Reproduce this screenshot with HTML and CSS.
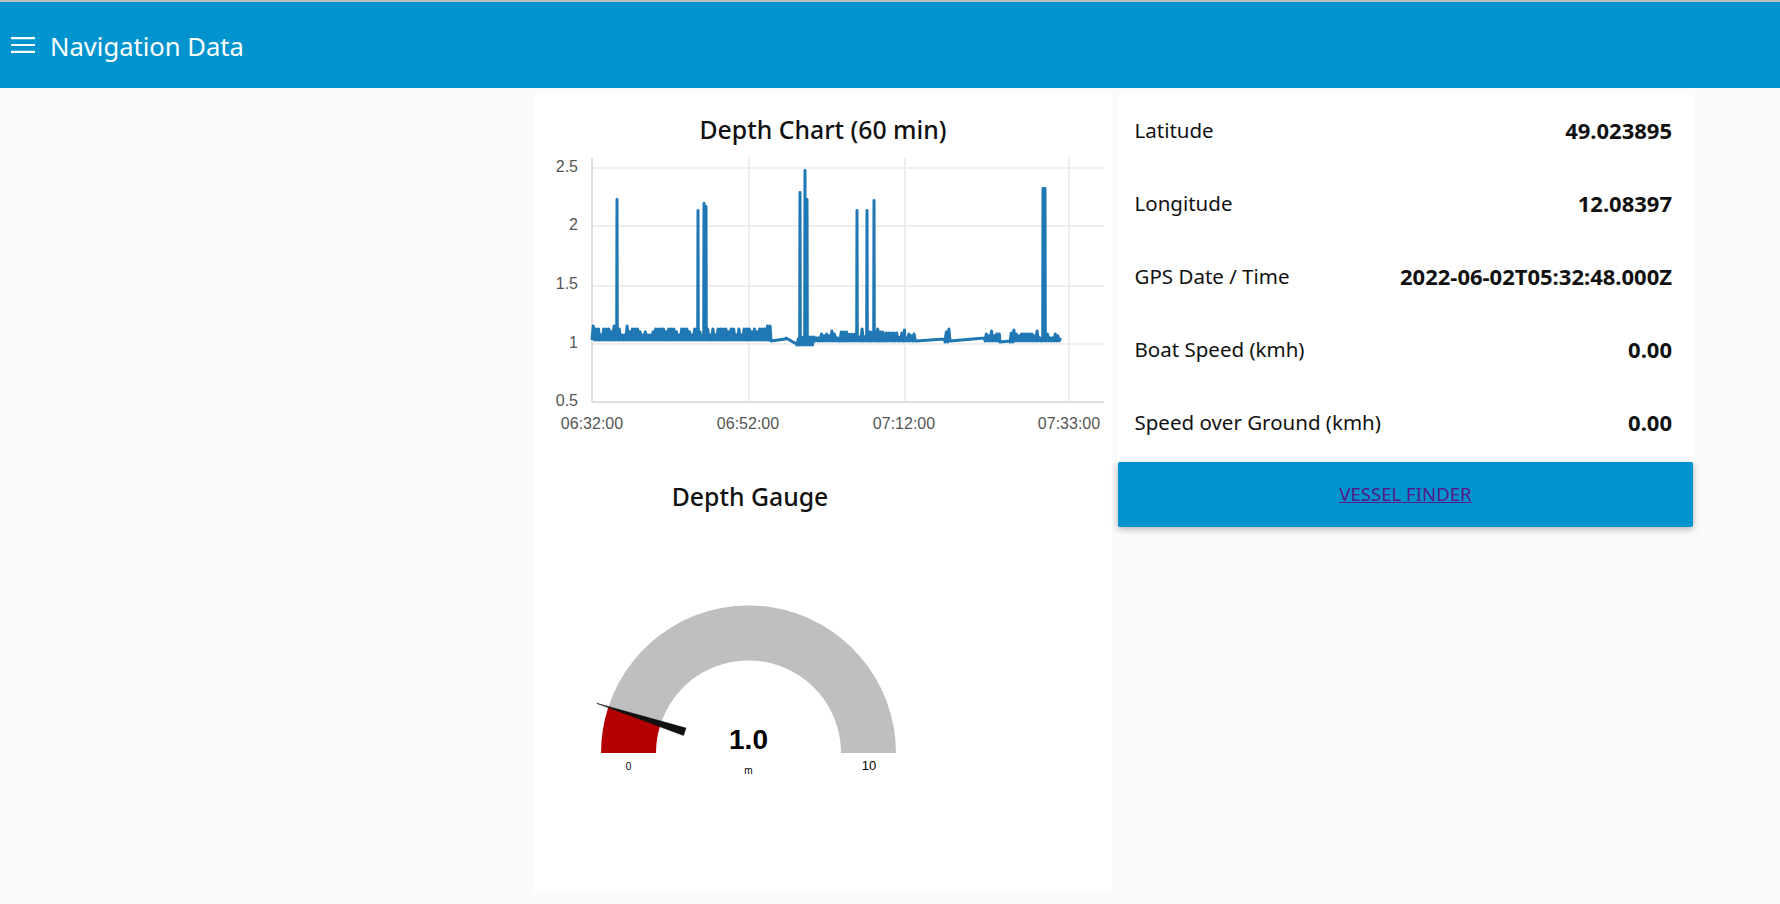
FILE: index.html
```html
<!DOCTYPE html>
<html lang="en">
<head>
    <meta charset="UTF-8">
    <title>Navigation Data</title>

    <link rel="stylesheet" href="styles.css">
</head>
<body>
<header class="toolbar">
    <svg class="menu-icon" width="24" height="16" viewBox="0 0 24 16">
        <path d="M0 1.2H24M0 8H24M0 14.8H24" stroke="#fff" stroke-width="2.2" fill="none"/>
    </svg>
    <h1 class="toolbar-title">Navigation Data</h1>
</header>

<main class="dashboard">
    <section class="panel panel-left">
        <div class="widget-chart">
            <h2 class="widget-title">Depth Chart (60 min)</h2>
            <svg class="chart" width="578" height="288" viewBox="534 152 578 288">
                <g class="grid">
                    <path d="M592 158V402M749 158V402M905 158V402M1069 158V402"/>
                    <path d="M592 168H1104M592 226H1104M592 286H1104M592 344H1104M592 402H1104"/>
                </g>
                <path class="axis" d="M592 158V402M592 402H1104"/>
                <g class="tick-y">
                    <text x="578" y="172">2.5</text>
                    <text x="578" y="230">2</text>
                    <text x="578" y="289">1.5</text>
                    <text x="578" y="348">1</text>
                    <text x="578" y="406">0.5</text>
                </g>
                <g class="tick-x">
                    <text x="592" y="429">06:32:00</text>
                    <text x="748" y="429">06:52:00</text>
                    <text x="904" y="429">07:12:00</text>
                    <text x="1069" y="429">07:33:00</text>
                </g>
                <polyline id="depth-line" class="depth-line" points=""/>
            </svg>
        </div>
        <div class="widget-gauge">
            <h2 class="widget-title">Depth Gauge</h2>
            <svg class="gauge" width="432" height="264" viewBox="534 526 432 264">
                <path d="M608.2 707.4A147.5 147.5 0 0 1 896 753H841A92.5 92.5 0 0 0 660.5 724.4Z" fill="#bfbfbf"/>
                <path d="M601 753A147.5 147.5 0 0 1 608.2 707.4L660.5 724.4A92.5 92.5 0 0 0 656 753Z" fill="#b30000"/>
                <polygon class="needle" points="596.7,703.3 686,728 683.5,735.5"/>
                <text class="gauge-value" x="748.5" y="749">1.0</text>
                <text class="gauge-small" x="628.5" y="770">0</text>
                <text class="gauge-small" x="748.5" y="774">m</text>
                <text class="gauge-max" x="869" y="770">10</text>
            </svg>
        </div>
    </section>

    <div class="column-right">
        <section class="panel panel-right">
            <div class="row"><span>Latitude</span><b>49.023895</b></div>
            <div class="row"><span>Longitude</span><b>12.08397</b></div>
            <div class="row"><span>GPS Date / Time</span><b>2022-06-02T05:32:48.000Z</b></div>
            <div class="row"><span>Boat Speed (kmh)</span><b>0.00</b></div>
            <div class="row"><span>Speed over Ground (kmh)</span><b>0.00</b></div>
        </section>
        <div class="button-link"><a href="#vessel-finder">VESSEL FINDER</a></div>
    </div>
</main>

<script src="chart.js"></script>
</body>
</html>
```

FILE: styles.css
```css
* {
    box-sizing: border-box;
}

html, body {
    margin: 0;
    height: 100%;
}

body {
    background-color: #fafafa;
    color: #111;
    font-family: "Noto Sans", "Open Sans", sans-serif;
    overflow: hidden;
}

.toolbar {
    display: flex;
    align-items: center;
    height: 88px;
    padding-left: 11px;
    background-color: #0094ce;
    border-top: 2px solid #bdbdbd;
    color: #fff;
}

.menu-icon {
    margin-right: 15px;
}

.toolbar-title {
    margin: 0;
    padding-top: 2px;
    font-size: 25.6px;
    font-weight: 400;
}

.dashboard {
    display: flex;
    gap: 5px;
    padding: 7px 0 0 534px;
}

.panel {
    background-color: #fff;
}

.panel-left {
    width: 578px;
    height: 797px;
}

.widget-title {
    display: flex;
    align-items: center;
    justify-content: center;
    height: 50px;
    margin: 0;
    font-size: 24.8px;
    font-weight: 500;
}

.widget-chart .widget-title {
    margin-top: 10px;
    height: 47px;
}

.widget-gauge {
    width: 432px;
    margin-top: 30px;
}

.widget-gauge .widget-title {
    height: 56px;
    padding-bottom: 4px;
}

.chart,
.gauge {
    display: block;
}

.grid path {
    stroke: #eee;
    stroke-width: 2;
    fill: none;
}

.axis {
    stroke: #ddd;
    stroke-width: 2;
    fill: none;
}

.tick-y text,
.tick-x text {
    font-family: "Liberation Sans", sans-serif;
    font-size: 16px;
    fill: #555;
}

.tick-y text {
    text-anchor: end;
}

.tick-x text {
    text-anchor: middle;
}

.depth-line {
    fill: none;
    stroke: #1f77b4;
    stroke-width: 3;
    stroke-linejoin: round;
}

.needle {
    fill: #111;
    stroke: #111;
    stroke-width: 0.5;
}

.gauge text {
    font-family: "Liberation Sans", sans-serif;
    text-anchor: middle;
}

.gauge-value {
    font-size: 28px;
    font-weight: 700;
}

.gauge-small {
    font-size: 10px;
}

.gauge-max {
    font-size: 13px;
}

.column-right {
    width: 578px;
}

.panel-right {
    padding: 0 23px 0 17.5px;
    height: 367px;
}

.row {
    display: flex;
    align-items: center;
    justify-content: space-between;
    height: 73px;
    padding-bottom: 3px;
    font-size: 20.5px;
}

.row b {
    font-size: 22px;
    font-weight: 700;
}

.button-link {
    display: flex;
    align-items: center;
    justify-content: center;
    width: 575px;
    height: 65px;
    margin-left: 1px;
    padding-bottom: 3px;
    background-color: #0094ce;
    border-radius: 2px;
    box-shadow: 0 2px 7px rgba(0,0,0,0.3);
    font-size: 18.6px;
}

.button-link a {
    color: #551a8b;
}
```

FILE: chart.js
```js
// depth samples, laid out in chart pixels
var SPIKES = [[617, 199.5], [698, 210.5], [704, 203.5], [706, 206.5], [800, 192.5], [805, 170.5], [807, 199.5],
    [857, 210.5], [867, 210.5], [874, 200.5], [1043, 188.5], [1044, 188.5], [1045, 188.5]];

// x from, x to, low edge, high edge of the noisy band
var BANDS = [
    [592, 771, 340, 329],
    [771, 786, 341, 339],
    [786, 797, 338, 344],
    [797, 815, 345, 337],
    [815, 840, 341, 334],
    [840, 885, 341, 332],
    [885, 905, 341, 333],
    [905, 916, 341, 334],
    [916, 945, 341, 339],
    [945, 950, 342, 332],
    [950, 985, 341, 338],
    [985, 1000, 341, 334],
    [1000, 1010, 342, 341],
    [1010, 1015, 342, 330],
    [1015, 1061, 341, 334]
];

var seed = 12345;
function rand() {
    seed = (seed + 0x6D2B79F5) | 0;
    var t = Math.imul(seed ^ (seed >>> 15), 1 | seed);
    t = (t + Math.imul(t ^ (t >>> 7), 61 | t)) ^ t;
    return ((t ^ (t >>> 14)) >>> 0) / 4294967296;
}

function pickLevel(band) {
    var range = band[2] - band[3];
    var r = rand();
    if (r < 0.6) return band[3];
    if (r < 0.78) return band[3] + range * 0.25;
    if (r < 0.95) return band[3] + range * 0.55;
    return band[3] - 3;
}

var points = [];
BANDS.forEach(function(band) {
    // small ranges are plain slopes, from the first edge to the second
    if (Math.abs(band[2] - band[3]) < 4 || band[0] === 786) {
        points.push([band[0], band[2]], [band[1] - 0.5, band[3]]);
        return;
    }
    var up = false;
    for (var x = band[0]; x < band[1]; x += 1.3) {
        points.push([x, up ? pickLevel(band) : band[2]]);
        up = !up;
    }
});

SPIKES.forEach(function(spike) {
    var i = points.findIndex(function(p) { return p[0] >= spike[0]; });
    points.splice(i, 0, [spike[0] - 0.3, 338], [spike[0], spike[1]], [spike[0] + 0.3, 338]);
});

document.getElementById('depth-line').setAttribute('points', points.map(function(p) {
    return p[0] + ',' + p[1];
}).join(' '));
```
